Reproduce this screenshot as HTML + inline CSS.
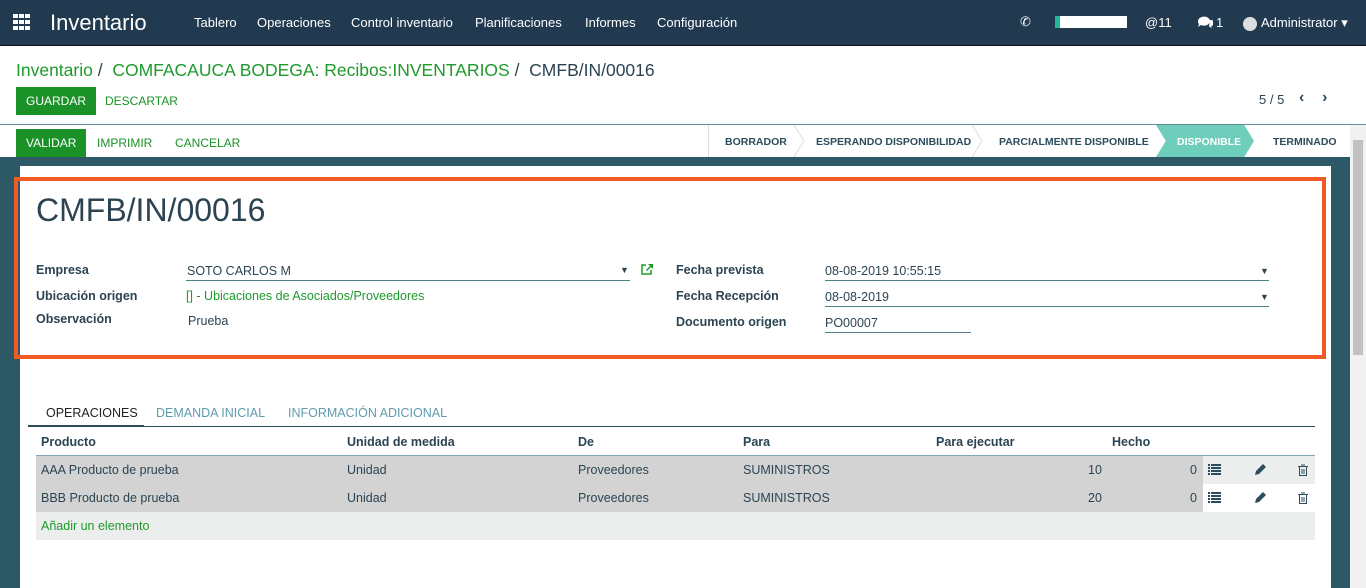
<!DOCTYPE html>
<html><head><meta charset="utf-8"><style>
*{box-sizing:border-box;margin:0;padding:0}
body{width:1366px;height:588px;overflow:hidden;font-family:"Liberation Sans",sans-serif;font-size:13px;color:#4c4c4c;background:#fff;position:relative}
.abs{position:absolute}
.nav{left:0;top:0;width:1366px;height:46px;background:#213a4f;border-bottom:1px solid #111;color:#fff}
.nav span{position:absolute;top:15px;font-size:13px}
.g{color:#1e9a2c}
.btn{position:absolute;background:#1b9227;color:#fff;font-size:12px;padding:0 10px;line-height:28px;height:28px}
.lnk{position:absolute;color:#1b9227;font-size:12px}
.status span{position:absolute;top:136px;font-size:10.5px;font-weight:bold;color:#2c4d5c}
.lbl{position:absolute;font-weight:bold;color:#2c4452;font-size:12.5px}
.val{position:absolute;color:#2c4452;font-size:12.5px}
.line{position:absolute;height:1px;background:#4f7d8c}
.row{position:absolute;left:36px;width:1167px;height:28px;background:#d3d3d3}
.t{position:absolute;font-size:12.5px;color:#2c4452}
</style></head><body>
<div class="abs nav">
 <svg class="abs" style="left:13px;top:14px" width="18" height="16"><g fill="#fff"><rect x="0" y="0" width="5" height="4"/><rect x="6" y="0" width="5" height="4"/><rect x="12" y="0" width="5" height="4"/><rect x="0" y="6" width="5" height="4"/><rect x="6" y="6" width="5" height="4"/><rect x="12" y="6" width="5" height="4"/><rect x="0" y="12" width="5" height="4"/><rect x="6" y="12" width="5" height="4"/><rect x="12" y="12" width="5" height="4"/></g></svg>
 <span style="left:50px;top:10px;font-size:22px">Inventario</span>
 <span style="left:194px">Tablero</span><span style="left:257px">Operaciones</span><span style="left:351px">Control inventario</span><span style="left:475px">Planificaciones</span><span style="left:585px">Informes</span><span style="left:657px">Configuración</span>
 <span style="left:1020px;top:14px">&#9990;</span>
 <div class="abs" style="left:1055px;top:16px;width:72px;height:12px;background:#fff;border-left:5px solid #21b799"></div>
 <span style="left:1145px">@11</span>
 <svg class="abs" style="left:1197px;top:16px" width="16" height="13"><path d="M1 5a6 4.5 0 1 1 3 4l-3 2 1-3a5 4 0 0 1-1-3z" fill="#fff"/><path d="M13 4a4 3 0 0 1 1 6l1 2-3-1.5" fill="#fff"/></svg>
 <span style="left:1216px">1</span>
 <div class="abs" style="left:1243px;top:17px;width:14px;height:14px;border-radius:50%;background:#ddd"></div>
 <span style="left:1261px">Administrator &#9662;</span>
</div>
<div class="abs" style="left:16px;top:60px;font-size:17.5px;color:#2c4452"><span class="g">Inventario</span> /&nbsp; <span class="g">COMFACAUCA BODEGA: Recibos:INVENTARIOS</span> /&nbsp; CMFB/IN/00016</div>
<div class="btn" style="left:16px;top:87px">GUARDAR</div>
<div class="lnk" style="left:105px;top:94px">DESCARTAR</div>
<div class="abs" style="left:1259px;top:92px;color:#2c4452">5 / 5</div>
<div class="abs" style="left:1299px;top:89px;font-weight:bold;color:#2c4d5c;font-size:16px">&#8249;&nbsp;&nbsp;&nbsp;&nbsp;&#8250;</div>
<div class="abs" style="left:0;top:124px;width:1366px;height:1px;background:#5d8f96"></div>
<div class="btn" style="left:16px;top:129px">VALIDAR</div>
<div class="lnk" style="left:97px;top:136px">IMPRIMIR</div>
<div class="lnk" style="left:175px;top:136px">CANCELAR</div>
<div class="abs" style="left:708px;top:125px;width:1px;height:32px;background:#ddd"></div>
<div class="abs" style="left:1156px;top:125px;width:98px;height:32px;background:#6fcdbb;clip-path:polygon(0 0,90% 0,100% 50%,90% 100%,0 100%,10% 50%)"></div>
<svg class="abs" style="left:790px;top:125px" width="400" height="32"><g stroke="#ddd" fill="none"><path d="M4 0L14 16L4 32"/><path d="M182 0L192 16L182 32"/></g></svg>
<div class="status"><span style="left:725px">BORRADOR</span><span style="left:816px">ESPERANDO DISPONIBILIDAD</span><span style="left:999px">PARCIALMENTE DISPONIBLE</span><span style="left:1177px;color:#fff">DISPONIBLE</span><span style="left:1273px">TERMINADO</span></div>
<div class="abs" style="left:0;top:157px;width:1350px;height:431px;background:#2d5966"></div>
<div class="abs" style="left:1350px;top:125px;width:16px;height:463px;background:#f1f1f1"></div>
<div class="abs" style="left:1353px;top:140px;width:10px;height:215px;background:#c1c1c1"></div>
<div class="abs" style="left:20px;top:166px;width:1311px;height:422px;background:#fff"></div>
<div class="abs" style="left:14px;top:177px;width:1312px;height:182px;border:4px solid #f15a24"></div>
<div class="abs" style="left:36px;top:192px;font-size:32px;color:#2c4452">CMFB/IN/00016</div>
<div class="lbl" style="left:36px;top:263px">Empresa</div>
<div class="lbl" style="left:36px;top:289px">Ubicación origen</div>
<div class="lbl" style="left:36px;top:312px">Observación</div>
<div class="val" style="left:187px;top:264px">SOTO CARLOS M</div>
<div class="line" style="left:186px;top:280px;width:444px"></div>
<div class="abs" style="left:620px;top:265px;font-size:9px;color:#2c4452">&#9660;</div>
<svg class="abs" style="left:640px;top:263px" width="14" height="13"><path d="M6 2H2v9h9V7" stroke="#1e9a2c" stroke-width="1.5" fill="none"/><path d="M8 1h5v5l-2-2-4 4-1-1 4-4z" fill="#1e9a2c"/></svg>
<div class="val" style="left:186px;top:289px;color:#1e9a2c">[] - Ubicaciones de Asociados/Proveedores</div>
<div class="val" style="left:188px;top:314px">Prueba</div>
<div class="lbl" style="left:676px;top:263px">Fecha prevista</div>
<div class="lbl" style="left:676px;top:289px">Fecha Recepción</div>
<div class="lbl" style="left:676px;top:315px">Documento origen</div>
<div class="val" style="left:825px;top:264px">08-08-2019 10:55:15</div>
<div class="line" style="left:825px;top:280px;width:444px"></div>
<div class="abs" style="left:1260px;top:266px;font-size:9px;color:#2c4452">&#9660;</div>
<div class="val" style="left:825px;top:290px">08-08-2019</div>
<div class="line" style="left:825px;top:306px;width:444px"></div>
<div class="abs" style="left:1260px;top:292px;font-size:9px;color:#2c4452">&#9660;</div>
<div class="val" style="left:825px;top:316px">PO00007</div>
<div class="line" style="left:825px;top:332px;width:146px"></div>
<div class="abs" style="left:46px;top:406px;font-size:12.5px;color:#222">OPERACIONES</div>
<div class="abs" style="left:156px;top:406px;font-size:12.5px;color:#5e9bae">DEMANDA INICIAL</div>
<div class="abs" style="left:288px;top:406px;font-size:12.5px;color:#5e9bae">INFORMACIÓN ADICIONAL</div>
<div class="abs" style="left:28px;top:426px;width:1287px;height:1px;background:#2c4d5c"></div>
<div class="abs" style="left:28px;top:425px;width:116px;height:2px;background:#2c4d5c"></div>
<div class="lbl" style="left:41px;top:435px">Producto</div><div class="lbl" style="left:347px;top:435px">Unidad de medida</div><div class="lbl" style="left:578px;top:435px">De</div><div class="lbl" style="left:743px;top:435px">Para</div><div class="lbl" style="left:936px;top:435px">Para ejecutar</div><div class="lbl" style="left:1112px;top:435px">Hecho</div>
<div class="abs" style="left:36px;top:455px;width:1279px;height:1px;background:#7ea6b3"></div>
<div class="abs" style="left:36px;top:456px;width:1279px;height:28px;background:#eceeed"></div>
<div class="row" style="top:456px"></div><div class="row" style="top:484px"></div>
<div class="abs" style="left:36px;top:512px;width:1279px;height:28px;background:#eceeed"></div>
<div class="t" style="left:41px;top:463px">AAA Producto de prueba</div><div class="t" style="left:347px;top:463px">Unidad</div><div class="t" style="left:578px;top:463px">Proveedores</div><div class="t" style="left:743px;top:463px">SUMINISTROS</div><div class="t" style="left:1088px;top:463px">10</div><div class="t" style="left:1190px;top:463px">0</div>
<div class="t" style="left:41px;top:491px">BBB Producto de prueba</div><div class="t" style="left:347px;top:491px">Unidad</div><div class="t" style="left:578px;top:491px">Proveedores</div><div class="t" style="left:743px;top:491px">SUMINISTROS</div><div class="t" style="left:1088px;top:491px">20</div><div class="t" style="left:1190px;top:491px">0</div>
<svg class="abs" style="left:1207px;top:463px" width="110" height="45"><g fill="#2c4d5c">
<rect x="1" y="1" width="2" height="2"/><rect x="4" y="1" width="10" height="2"/><rect x="1" y="4" width="2" height="2"/><rect x="4" y="4" width="10" height="2"/><rect x="1" y="7" width="2" height="2"/><rect x="4" y="7" width="10" height="2"/><rect x="1" y="10" width="2" height="2"/><rect x="4" y="10" width="10" height="2"/>
<rect x="1" y="29" width="2" height="2"/><rect x="4" y="29" width="10" height="2"/><rect x="1" y="32" width="2" height="2"/><rect x="4" y="32" width="10" height="2"/><rect x="1" y="35" width="2" height="2"/><rect x="4" y="35" width="10" height="2"/><rect x="1" y="38" width="2" height="2"/><rect x="4" y="38" width="10" height="2"/>
<path d="M48 12l1-4 7-7 3 3-7 7z"/><path d="M48 40l1-4 7-7 3 3-7 7z"/></g>
<g stroke="#2c4d5c" fill="none" stroke-width="1"><path d="M91 3.5h10M94 2h4M92.5 4v8.5h7V4M95 6v5M97 6v5"/><path d="M91 31.5h10M94 30h4M92.5 32v8.5h7V32M95 34v5M97 34v5"/></g></svg>
<div class="abs g" style="left:41px;top:519px;font-size:12.5px">Añadir un elemento</div>
</body></html>
